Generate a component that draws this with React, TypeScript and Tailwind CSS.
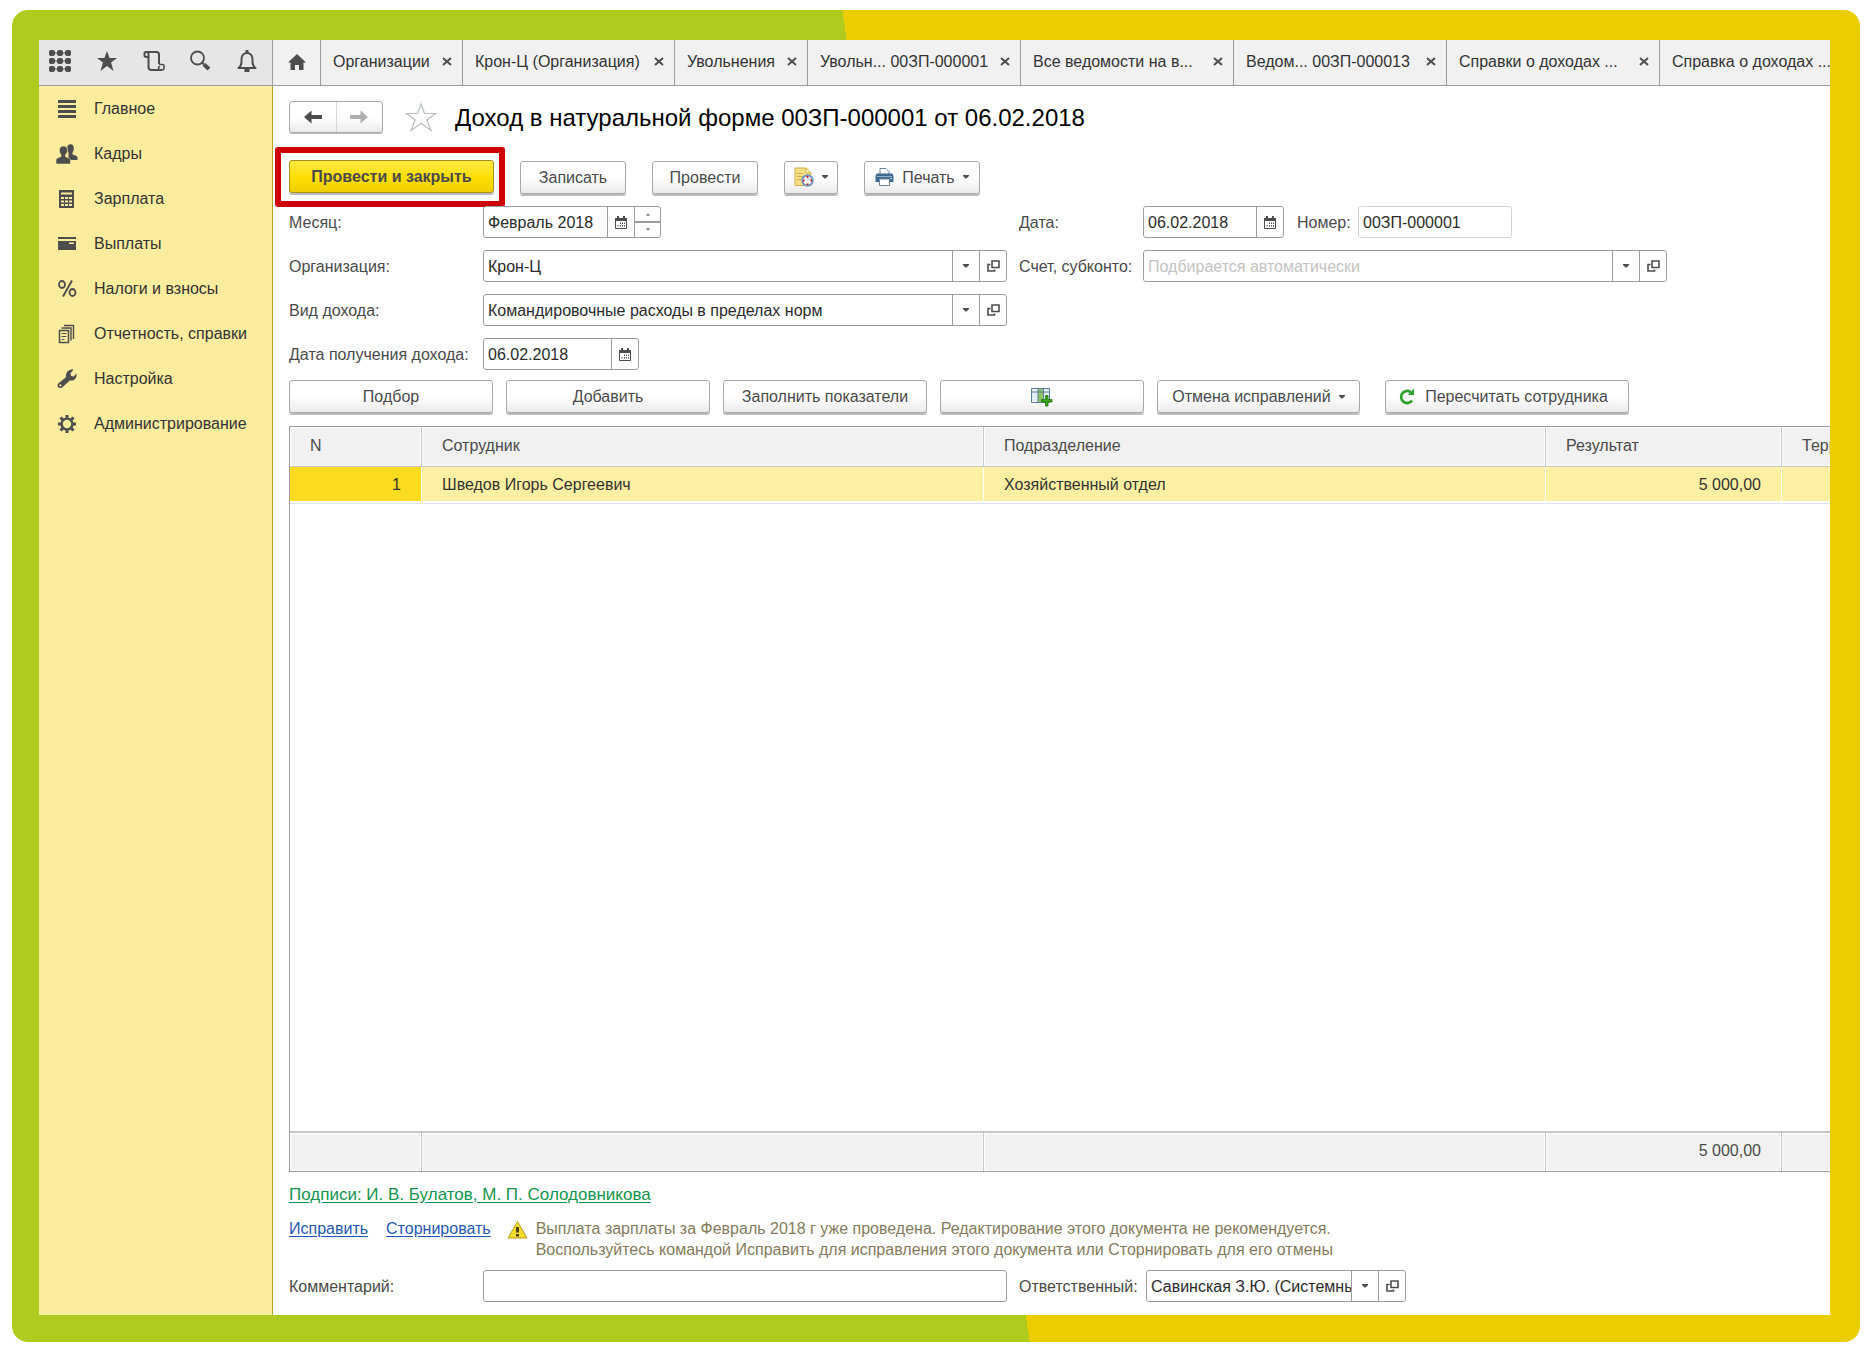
import type { ReactNode } from "react";

const menu = [
  { title: "Главное", icon: <MainIcon /> },
  { title: "Кадры", icon: <PeopleIcon /> },
  { title: "Зарплата", icon: <CalcIcon /> },
  { title: "Выплаты", icon: <CardIcon /> },
  { title: "Налоги и взносы", icon: <PercentIcon /> },
  { title: "Отчетность, справки", icon: <ReportsIcon /> },
  { title: "Настройка", icon: <WrenchIcon /> },
  { title: "Администрирование", icon: <GearIcon /> },
];

const tabs = [
  { title: "Организации", width: "w-[142px]" },
  { title: "Крон-Ц (Организация)", width: "w-[212px]" },
  { title: "Увольнения", width: "w-[133px]" },
  { title: "Увольн... 00ЗП-000001", width: "w-[213px]" },
  { title: "Все ведомости на в...", width: "w-[213px]" },
  { title: "Ведом... 00ЗП-000013", width: "w-[213px]" },
  { title: "Справки о доходах ...", width: "w-[213px]" },
  { title: "Справка о доходах ...", width: "w-[213px]" },
];

/* ---------- icons ---------- */

function AppsIcon() {
  return (
    <svg width="22" height="22" viewBox="0 0 22 22" fill="#4d4d4d">
      {[0, 8, 16].map((y) =>
        [0, 8, 16].map((x) => <rect key={`${x}-${y}`} x={x} y={y} width="6" height="6" rx="2" />)
      )}
      <path d="M5 2.500h12v1H5zM5 10.500h12v1H5zM5 18.500h12v1H5z" />
    </svg>
  );
}

function StarIcon() {
  return (
    <svg width="22" height="22" viewBox="0 0 22 22" fill="#4d4d4d">
      <path d="M11 1l2.600 7H21l-5.900 4.600L17.500 21 11 16l-6.500 5 2.400-8.400L1 8h7.400z" />
    </svg>
  );
}

function HistoryIcon() {
  return (
    <svg width="22" height="22" viewBox="0 0 22 22" fill="none" stroke="#4d4d4d" strokeWidth="2">
      <path d="M5.500 7H3A1.500 1.500 0 0 1 1.500 5.500v-2A1.500 1.500 0 0 1 3 2h10.500a2.500 2.500 0 0 1 2.500 2.500V14" />
      <path d="M3.500 2a2 2 0 0 1 2 2v13a3 3 0 0 0 3 3H19" />
      <path d="M17 20a2 2 0 0 1-1.500-2c0-1 .8-1.500 1.500-1.500M16 14.500h3.500a1.500 1.500 0 0 1 1.500 1.500v2a2 2 0 0 1-2 2" strokeWidth="1.600" />
    </svg>
  );
}

function SearchIcon() {
  return (
    <svg width="22" height="22" viewBox="0 0 22 22" fill="none" stroke="#4d4d4d">
      <circle cx="8.500" cy="8" r="6.500" strokeWidth="1.800" />
      <path d="M13 12.500l2 2" strokeWidth="2" />
      <path d="M15 14.500l5 4.500" strokeWidth="4" />
    </svg>
  );
}

function BellIcon() {
  return (
    <svg width="22" height="22" viewBox="0 0 22 22" fill="none" stroke="#4d4d4d" strokeWidth="2">
      <path d="M2.500 18c2-1.500 3-3 3-6V9c0-3.500 2.500-6 5.500-6s5.500 2.500 5.500 6v3c0 3 1 4.500 3 6z" strokeLinejoin="round" />
      <path d="M11 0v3" strokeWidth="3" />
      <path d="M8.500 18.500h5V22h-5z" fill="#4d4d4d" stroke="none" />
    </svg>
  );
}

function HomeIcon() {
  return (
    <svg width="18" height="16" viewBox="0 0 18 16" fill="#4d4d4d">
      <path d="M9 0L0 8.500h2.500V16h4.500v-5h4v5h4.500V8.500H18z" />
    </svg>
  );
}

function MainIcon() {
  return (
    <svg width="20" height="20" viewBox="0 0 20 20" fill="#4d4d4d">
      <path d="M1 1h18v3H1zM1 6h18v3H1zM1 11h18v3H1zM1 16h18v3H1z" />
    </svg>
  );
}

function PeopleIcon() {
  return (
    <svg width="22" height="20" viewBox="0 0 22 20" fill="#4d4d4d">
      <ellipse cx="14.500" cy="4.500" rx="3.300" ry="4.300" />
      <path d="M12.500 8h4v2.500l3.500 1.200c1 .4 1.500 1 1.500 2V16h-9z" />
      <path
        d="M7.500 2C10 2 11.500 3.500 11.500 6c0 2-.7 3.500-2 4.600v2l3 1.200c1.500.6 2 1.400 2 2.700V20H0v-3.500c0-1.300.6-2.100 2-2.700l3-1.200v-2c-1-1.100-1.600-2.600-1.600-4.600 0-2.500 1.600-4 4.100-4z"
        stroke="#fbec9e"
        strokeWidth=".6"
      />
    </svg>
  );
}

function CalcIcon() {
  return (
    <svg width="20" height="20" viewBox="0 0 20 20">
      <path d="M2 1h15v18H2z" fill="#4d4d4d" />
      <path d="M4 3.500h11v2H4zM4 8h3v2H4zM8 8h3v2H8zM12 8h3v2h-3zM4 11.500h3v2H4zM8 11.500h3v2H8zM12 11.500h3v2h-3zM4 15h3v2H4zM8 15h3v2H8zM12 15h3v2h-3z" fill="#fbec9e" />
    </svg>
  );
}

function CardIcon() {
  return (
    <svg width="20" height="20" viewBox="0 0 20 20">
      <path d="M1 3h18v2H1zM1 7h18v9H1z" fill="#4d4d4d" />
      <path d="M12 8.500h5V10h-5z" fill="#fbec9e" />
    </svg>
  );
}

function PercentIcon() {
  return (
    <svg width="20" height="20" viewBox="0 0 20 20" fill="none" stroke="#4d4d4d" strokeWidth="1.800">
      <ellipse cx="5" cy="5.500" rx="3" ry="3.500" />
      <ellipse cx="15.500" cy="13.500" rx="3" ry="3.500" />
      <path d="M15 1.500L6 17.500" />
    </svg>
  );
}

function ReportsIcon() {
  return (
    <svg width="20" height="20" viewBox="0 0 20 20" fill="none" stroke="#4d4d4d">
      <path d="M7 1.500h9.500V15" strokeWidth="1.400" />
      <path d="M4.500 4h9.500v12.500" strokeWidth="1.400" />
      <path d="M2.500 6.500h9V18.500h-9z" strokeWidth="1.500" />
      <path d="M4.500 9.500h5M4.500 12.500h5M4.500 15.500h3" strokeWidth="1.200" />
    </svg>
  );
}

function WrenchIcon() {
  return (
    <svg width="20" height="20" viewBox="0 0 20 20" fill="#4d4d4d">
      <path d="M13.500 .8c1.500-.6 2.500-.4 3 0L13.500 4.300l.6 2.600 2.700.6L19.300 4.500c.6 2.200-.1 4.600-1.600 5.900-1.500 1.300-3.500 1.400-5 1L5.500 18.200c-1 1.200-3 1.200-4.200 0s-1-3 .2-4L9 8.200C8.600 6.500 9 4.600 10 3.200c.8-1.200 2-2 3.500-2.400z" />
      <circle cx="3.400" cy="16.400" r="1.100" fill="#fbec9e" />
    </svg>
  );
}

function GearIcon() {
  return (
    <svg width="20" height="20" viewBox="0 0 20 20" fill="none" stroke="#4d4d4d">
      <circle cx="10" cy="10" r="5.400" strokeWidth="2.400" />
      <path d="M10 1v3M10 16v3M1 10h3M16 10h3M3.500 3.500l2.300 2.300M14.200 14.200l2.300 2.300M3.500 16.500l2.300-2.300M14.200 5.800l2.300-2.300" strokeWidth="3" />
    </svg>
  );
}

function ArrowIcon({ back = false }: { back?: boolean }) {
  return back ? (
    <svg width="18" height="14" viewBox="0 0 18 14" fill="#4d4d4d">
      <path d="M0 7l7.500-6.500V5H18v4H7.500v4.500z" />
    </svg>
  ) : (
    <svg width="18" height="14" viewBox="0 0 18 14" fill="#b0b0b0">
      <path d="M18 7l-7.500-6.500V5H0v4h10.500v4.500z" />
    </svg>
  );
}

function FavoriteIcon() {
  return (
    <svg width="32" height="30" viewBox="0 0 32 30" fill="none" stroke="#b9bfc5" strokeWidth="1.200">
      <path d="M16 2l3.500 9.500H30.500l-8.700 6.500L26 28.500 16 21.500 6 28.500 10.200 18 1.500 11.500h11z" />
    </svg>
  );
}

function CalendarIcon() {
  return (
    <svg width="12" height="13" viewBox="0 0 12 13">
      <path d="M.500 2.500h11v10H.500z" fill="#fff" stroke="#4d4d4d" />
      <path d="M0 2h12v3H0zM2 0h2v3H2zM8 0h2v3H8z" fill="#4d4d4d" />
      <path d="M5 6.500h1V8H5zM7 6.500h1V8H7zM9 6.500h1V8H9zM2.500 9h1v1.500h-1zM5 9h1v1.500H5zM7 9h1v1.500H7zM9 9h1v1.500H9z" fill="#4d4d4d" />
    </svg>
  );
}

function OpenIcon() {
  return (
    <svg width="13" height="12" viewBox="0 0 13 12" fill="none" stroke="#4d4d4d" strokeWidth="1.600">
      <path d="M5 1h7v6.500H5z" />
      <path d="M3.500 4.500H1V11h6.500V9.500" />
    </svg>
  );
}

function Caret({ up = false }: { up?: boolean }) {
  return (
    <svg width="6" height="4" viewBox="0 0 6 4" fill="#4d4d4d">
      <path d={up ? "M1 3.500h4l-2-2z" : "M0 0h6v1L3.500 3.500h-1L0 1z"} />
    </svg>
  );
}

function PostingsIcon() {
  return (
    <svg width="20" height="20" viewBox="0 0 20 20">
      <path d="M1 1h11l5 5v12.500H1z" fill="#f5df84" stroke="#d3ad4a" />
      <path d="M12 1v5h5z" fill="#fff3c0" stroke="#d3ad4a" />
      <path d="M3 6.500h6M3 9.500h6M3 12.500h4" stroke="#d3ad4a" />
      <circle cx="13.500" cy="13.500" r="5.200" fill="#fff" stroke="#6f94bd" strokeWidth="2" />
      <path d="M13.500 9.500v2.500h3" stroke="#8fb1d6" fill="none" />
      <path d="M12.500 9h2v1.500h-2zM12.500 16.500h2V18h-2zM9 12.500h1.500v2H9zM16.500 12.500H18v2h-1.500z" fill="#d21414" />
    </svg>
  );
}

function PrintIcon() {
  return (
    <svg width="19" height="18" viewBox="0 0 19 18">
      <path d="M5 6V.500h6L14 3.500V6" fill="#fff" stroke="#6d8296" />
      <path d="M1.500 5.500h16L18.500 8v6H.5V8z" fill="#3f6a8f" />
      <path d="M2 8.500h15" stroke="#8fb1cc" />
      <path d="M4.500 11h10v6.500h-10z" fill="#fff" stroke="#6d8296" />
      <path d="M15.500 10.500h1.500" stroke="#fff" />
    </svg>
  );
}

function ColumnsIcon() {
  return (
    <svg width="22" height="20" viewBox="0 0 22 20">
      <path d="M.5 1.500h18v14H.5z" fill="#e4eef5" stroke="#5d7f99" />
      <path d="M7 1.500h5.500v14H7z" fill="#8cc665" stroke="#5d7f99" />
      <path d="M.5 5h18M12.500 1.500v14" stroke="#5d7f99" />
      <path d="M14.500 8.500h2.500V12.500h4v2.500h-4V19h-2.500v-4h-4v-2.500h4z" fill="#3aa317" stroke="#23750b" strokeWidth=".8" />
    </svg>
  );
}

function RefreshIcon() {
  return (
    <svg width="17" height="17" viewBox="0 0 17 17">
      <path d="M14 12.500A6 6 0 1 1 12.500 4" fill="none" stroke="#2fa12f" strokeWidth="2.800" />
      <path d="M16 .5V7H9.500z" fill="#2fa12f" />
    </svg>
  );
}

function WarningIcon() {
  return (
    <svg width="21" height="19" viewBox="0 0 21 19">
      <path d="M10.500 1.500L20 18H1z" fill="#f6dc2c" stroke="#b59b1d" strokeLinejoin="round" />
      <path d="M9 7h3v5.500H9zM9 14h3v2.500H9z" fill="#4b4310" />
    </svg>
  );
}

/* ---------- controls ---------- */

type ButtonProps = { children: ReactNode; className?: string; label?: string };

const Button = ({ children, className = "", label }: ButtonProps) => (
  <button
    aria-label={label}
    className={`flex h-[33px] shrink-0 items-center justify-center whitespace-nowrap rounded-[3px] border border-[#a8a8a8] bg-linear-to-b from-white from-50% to-[#ebebeb] text-[#4a4a4a] shadow-[0_2px_0_#bdbdbd] ${className}`}
  >
    {children}
  </button>
);

const FieldButton = ({ label, children }: { label: string; children: ReactNode }) => (
  <button
    aria-label={label}
    className="flex w-[27px] shrink-0 items-center justify-center border-l border-[#9d9d9d]"
  >
    {children}
  </button>
);

type FieldProps = {
  id: string;
  label: string;
  labelClass: string;
  boxClass: string;
  value?: string;
  placeholder?: string;
  children?: ReactNode;
};

const Field = ({ id, label, labelClass, boxClass, value = "", placeholder, children }: FieldProps) => (
  <div className="flex items-center">
    <label htmlFor={id} className={`shrink-0 whitespace-nowrap text-[#4a4a4a] ${labelClass}`}>
      {label}
    </label>
    <div className={`flex h-8 min-w-0 overflow-hidden rounded-[3px] border bg-white ${boxClass}`}>
      <input
        id={id}
        defaultValue={value}
        placeholder={placeholder}
        className="w-0 min-w-0 flex-1 pl-1 text-[#2b2b2b] outline-none placeholder:text-[#c3c3c3]"
      />
      {children}
    </div>
  </div>
);

const SelectButtons = () => (
  <>
    <FieldButton label="Выбрать">
      <Caret />
    </FieldButton>
    <FieldButton label="Открыть">
      <OpenIcon />
    </FieldButton>
  </>
);

const CalendarButton = () => (
  <FieldButton label="Календарь">
    <CalendarIcon />
  </FieldButton>
);

/* ---------- page parts ---------- */

const TopBar = () => (
  <header className="flex h-[46px] shrink-0 border-b border-[#9d9d9d] bg-[#f1f1f1]">
    <div className="flex w-[234px] shrink-0 items-center justify-between border-r border-[#9d9d9d] bg-[#e6e6e6] pb-1 pl-2.5 pr-3.5">
      <button aria-label="Меню функций"><AppsIcon /></button>
      <button aria-label="Избранное"><StarIcon /></button>
      <button aria-label="История"><HistoryIcon /></button>
      <button aria-label="Поиск"><SearchIcon /></button>
      <button aria-label="Оповещения"><BellIcon /></button>
    </div>
    <button aria-label="Начальная страница" className="flex w-[47px] shrink-0 items-center justify-center pb-0.5">
      <HomeIcon />
    </button>
    <nav className="flex min-w-0 flex-1 overflow-hidden">
      {tabs.map((tab) => (
        <div
          key={tab.title}
          className={`flex shrink-0 items-center justify-between border-l border-[#9d9d9d] pl-3 pr-1.5 pb-0.5 text-[#333] ${tab.width}`}
        >
          <a href="#" className="whitespace-nowrap">{tab.title}</a>
          <button aria-label="Закрыть вкладку" className="p-1">
            <svg width="10" height="9" viewBox="0 0 10 9" stroke="#4d4d4d" strokeWidth="2">
              <path d="M1 1l8 7M9 1L1 8" />
            </svg>
          </button>
        </div>
      ))}
    </nav>
  </header>
);

const Sidebar = () => (
  <nav className="w-[234px] shrink-0 border-r border-[#b9a41f] bg-[#fbec9e]">
    {menu.map((item) => (
      <a key={item.title} href="#" className="flex h-[45px] items-center gap-4 pl-[17px] text-[#333]">
        <span className="flex w-[22px] justify-center">{item.icon}</span>
        <span className="whitespace-nowrap">{item.title}</span>
      </a>
    ))}
  </nav>
);

const headCell =
  "h-10 overflow-hidden whitespace-nowrap border-b border-r border-[#c6c6c6] bg-[#f1f1f1] pb-0.5 pl-5 text-left font-normal text-[#4a4a4a] shadow-[inset_0_0_0_1px_#fff]";
const rowCell = "h-9 border-r border-b-2 border-white bg-[#fdf0a2] text-[#333]";
const footCell =
  "h-10 border-r border-t-2 border-[#c6c6c6] bg-[#f1f1f1] pb-1 text-[#4a4a4a] shadow-[inset_0_0_0_1px_#fff]";

const EmployeesTable = () => (
  <div className="mt-[13px] min-h-0 flex-1 overflow-hidden border-y border-l border-[#9d9d9d]">
    {/* the last column runs past the window edge */}
    <table className="h-full w-[calc(100%+120px)] table-fixed border-separate border-spacing-0">
      <colgroup>
        <col className="w-[132px]" />
        <col className="w-[562px]" />
        <col className="w-[562px]" />
        <col className="w-[236px]" />
        <col />
      </colgroup>
      <thead>
        <tr>
          <th className={headCell}>N</th>
          <th className={headCell}>Сотрудник</th>
          <th className={headCell}>Подразделение</th>
          <th className={headCell}>Результат</th>
          <th className={headCell}>Территория</th>
        </tr>
      </thead>
      <tbody>
        <tr>
          <td className="h-9 border-r border-b-2 border-white bg-[#fbdb20] pr-5 text-right text-[#333]">1</td>
          <td className={`${rowCell} pl-5`}>Шведов Игорь Сергеевич</td>
          <td className={`${rowCell} pl-5`}>Хозяйственный отдел</td>
          <td className={`${rowCell} pr-5 text-right`}>5 000,00</td>
          <td className={rowCell}></td>
        </tr>
        <tr>
          <td colSpan={5} className="h-full border-t border-[#e3e3e3]"></td>
        </tr>
      </tbody>
      <tfoot>
        <tr>
          <td className={footCell}></td>
          <td className={footCell}></td>
          <td className={footCell}></td>
          <td className={`${footCell} pr-5 text-right`}>5 000,00</td>
          <td className={footCell}></td>
        </tr>
      </tfoot>
    </table>
  </div>
);

const App = () => {
  return (
    <div className="h-screen bg-white pt-2.5 pr-3.5 pb-[15px] pl-3 font-['Liberation_Sans',Arial,sans-serif] text-base leading-[21px]">
      <div className="h-full rounded-2xl bg-[linear-gradient(82deg,#afcb1f_50%,#ebcd00_50%)] pt-[30px] pr-[30px] pb-[27px] pl-[27px]">
        <div className="flex h-full flex-col overflow-hidden bg-white">
          <TopBar />
          <div className="flex min-h-0 flex-1">
            <Sidebar />
            <main className="flex min-w-0 flex-1 flex-col pt-[15px] pb-[13px] pl-4">
              <div className="flex h-8 items-center">
                <div className="flex h-8 w-[94px] rounded-[3px] border border-[#a8a8a8] bg-linear-to-b from-white from-50% to-[#ebebeb] shadow-[0_1px_0_#bdbdbd]">
                  <button aria-label="Назад" className="flex flex-1 items-center justify-center">
                    <ArrowIcon back />
                  </button>
                  <button aria-label="Вперед" className="flex flex-1 items-center justify-center border-l border-[#d6d6d6]">
                    <ArrowIcon />
                  </button>
                </div>
                <button aria-label="В избранное" className="ml-[22px]">
                  <FavoriteIcon />
                </button>
                <h1 className="ml-[18px] whitespace-nowrap pt-0.5 text-2xl text-black">
                  Доход в натуральной форме 00ЗП-000001 от 06.02.2018
                </h1>
              </div>

              <div className="mt-[14px] -mb-px -ml-3.5 flex items-center">
                <div className="rounded-[3px] border-6 border-[#ce0006] pt-[7px] pr-[5px] pb-2 pl-2">
                  <button className="flex h-[33px] w-[205px] items-center justify-center whitespace-nowrap rounded-[3px] border border-[#a8901a] bg-linear-to-b from-[#ffe83c] via-[#fee000] to-[#efcf00] font-bold text-[#4a4a4a] shadow-[0_2px_0_#bdbdbd]">
                    Провести и закрыть
                  </button>
                </div>
                <Button className="ml-[15px] w-[106px]">Записать</Button>
                <Button className="ml-[26px] w-[106px]">Провести</Button>
                <Button className="ml-[26px] w-[54px] gap-2" label="Движения документа">
                  <PostingsIcon />
                  <Caret />
                </Button>
                <Button className="ml-[26px] w-[116px] gap-2">
                  <PrintIcon />
                  Печать
                  <Caret />
                </Button>
              </div>

              <div className="flex gap-3">
                <div className="flex max-w-[718px] flex-1 flex-col gap-3">
                  <Field id="month" label="Месяц:" labelClass="w-[194px]" boxClass="w-[178px] border-[#9d9d9d]" value="Февраль 2018">
                    <CalendarButton />
                    <div className="flex w-[26px] flex-col border-l border-[#9d9d9d]">
                      <button aria-label="Следующий месяц" className="flex flex-1 items-center justify-center border-b-2 border-[#9d9d9d]">
                        <Caret up />
                      </button>
                      <button aria-label="Предыдущий месяц" className="flex flex-1 items-center justify-center">
                        <svg width="6" height="4" viewBox="0 0 6 4" fill="#4d4d4d">
                          <path d="M1 .500h4l-2 2z" />
                        </svg>
                      </button>
                    </div>
                  </Field>
                  <Field id="org" label="Организация:" labelClass="w-[194px]" boxClass="flex-1 border-[#9d9d9d]" value="Крон-Ц">
                    <SelectButtons />
                  </Field>
                  <Field id="kind" label="Вид дохода:" labelClass="w-[194px]" boxClass="flex-1 border-[#9d9d9d]" value="Командировочные расходы в пределах норм">
                    <SelectButtons />
                  </Field>
                  <Field id="income-date" label="Дата получения дохода:" labelClass="w-[194px]" boxClass="w-[156px] border-[#9d9d9d]" value="06.02.2018">
                    <CalendarButton />
                  </Field>
                </div>
                <div className="flex max-w-[648px] flex-1 flex-col gap-3">
                  <div className="flex gap-[13px]">
                    <Field id="date" label="Дата:" labelClass="w-[124px]" boxClass="w-[141px] border-[#9d9d9d]" value="06.02.2018">
                      <CalendarButton />
                    </Field>
                    <Field id="number" label="Номер:" labelClass="w-[61px]" boxClass="w-[154px] border-[#d4d4d4]" value="00ЗП-000001" />
                  </div>
                  <Field id="account" label="Счет, субконто:" labelClass="w-[124px]" boxClass="flex-1 border-[#9d9d9d]" placeholder="Подбирается автоматически">
                    <SelectButtons />
                  </Field>
                </div>
              </div>

              <div className="mt-2.5 flex gap-[13px]">
                <Button className="w-[204px]">Подбор</Button>
                <Button className="w-[204px]">Добавить</Button>
                <Button className="w-[204px]">Заполнить показатели</Button>
                <Button className="w-[204px]" label="Настройка колонок">
                  <ColumnsIcon />
                </Button>
                <Button className="w-[203px] gap-2">
                  Отмена исправлений
                  <Caret />
                </Button>
                <Button className="ml-3 w-[244px] gap-2.5 pr-2">
                  <RefreshIcon />
                  Пересчитать сотрудника
                </Button>
              </div>

              <EmployeesTable />

              <div className="mt-2.5 flex h-6 items-center">
                <a href="#" className="text-[17px] text-[#12954f] underline underline-offset-2">
                  Подписи: И. В. Булатов, М. П. Солодовникова
                </a>
              </div>
              <div className="mt-3 flex items-start">
                <a href="#" className="text-[#1f57b5] underline underline-offset-2">Исправить</a>
                <a href="#" className="ml-[18px] text-[#1f57b5] underline underline-offset-2">Сторнировать</a>
                <span className="ml-4 mt-0.5"><WarningIcon /></span>
                <p className="ml-2 whitespace-nowrap text-[#857b5c]">
                  Выплата зарплаты за Февраль 2018 г уже проведена. Редактирование этого документа не рекомендуется.
                  <br />
                  Воспользуйтесь командой Исправить для исправления этого документа или Сторнировать для его отмены
                </p>
              </div>
              <div className="mt-2.5 flex gap-3">
                <div className="max-w-[718px] flex-1">
                  <Field id="comment" label="Комментарий:" labelClass="w-[194px]" boxClass="flex-1 border-[#9d9d9d]" />
                </div>
                <Field id="owner" label="Ответственный:" labelClass="w-[127px]" boxClass="w-[260px] border-[#9d9d9d]" value="Савинская З.Ю. (Системный программист)">
                  <SelectButtons />
                </Field>
              </div>
            </main>
          </div>
        </div>
      </div>
    </div>
  );
};

export default App;
